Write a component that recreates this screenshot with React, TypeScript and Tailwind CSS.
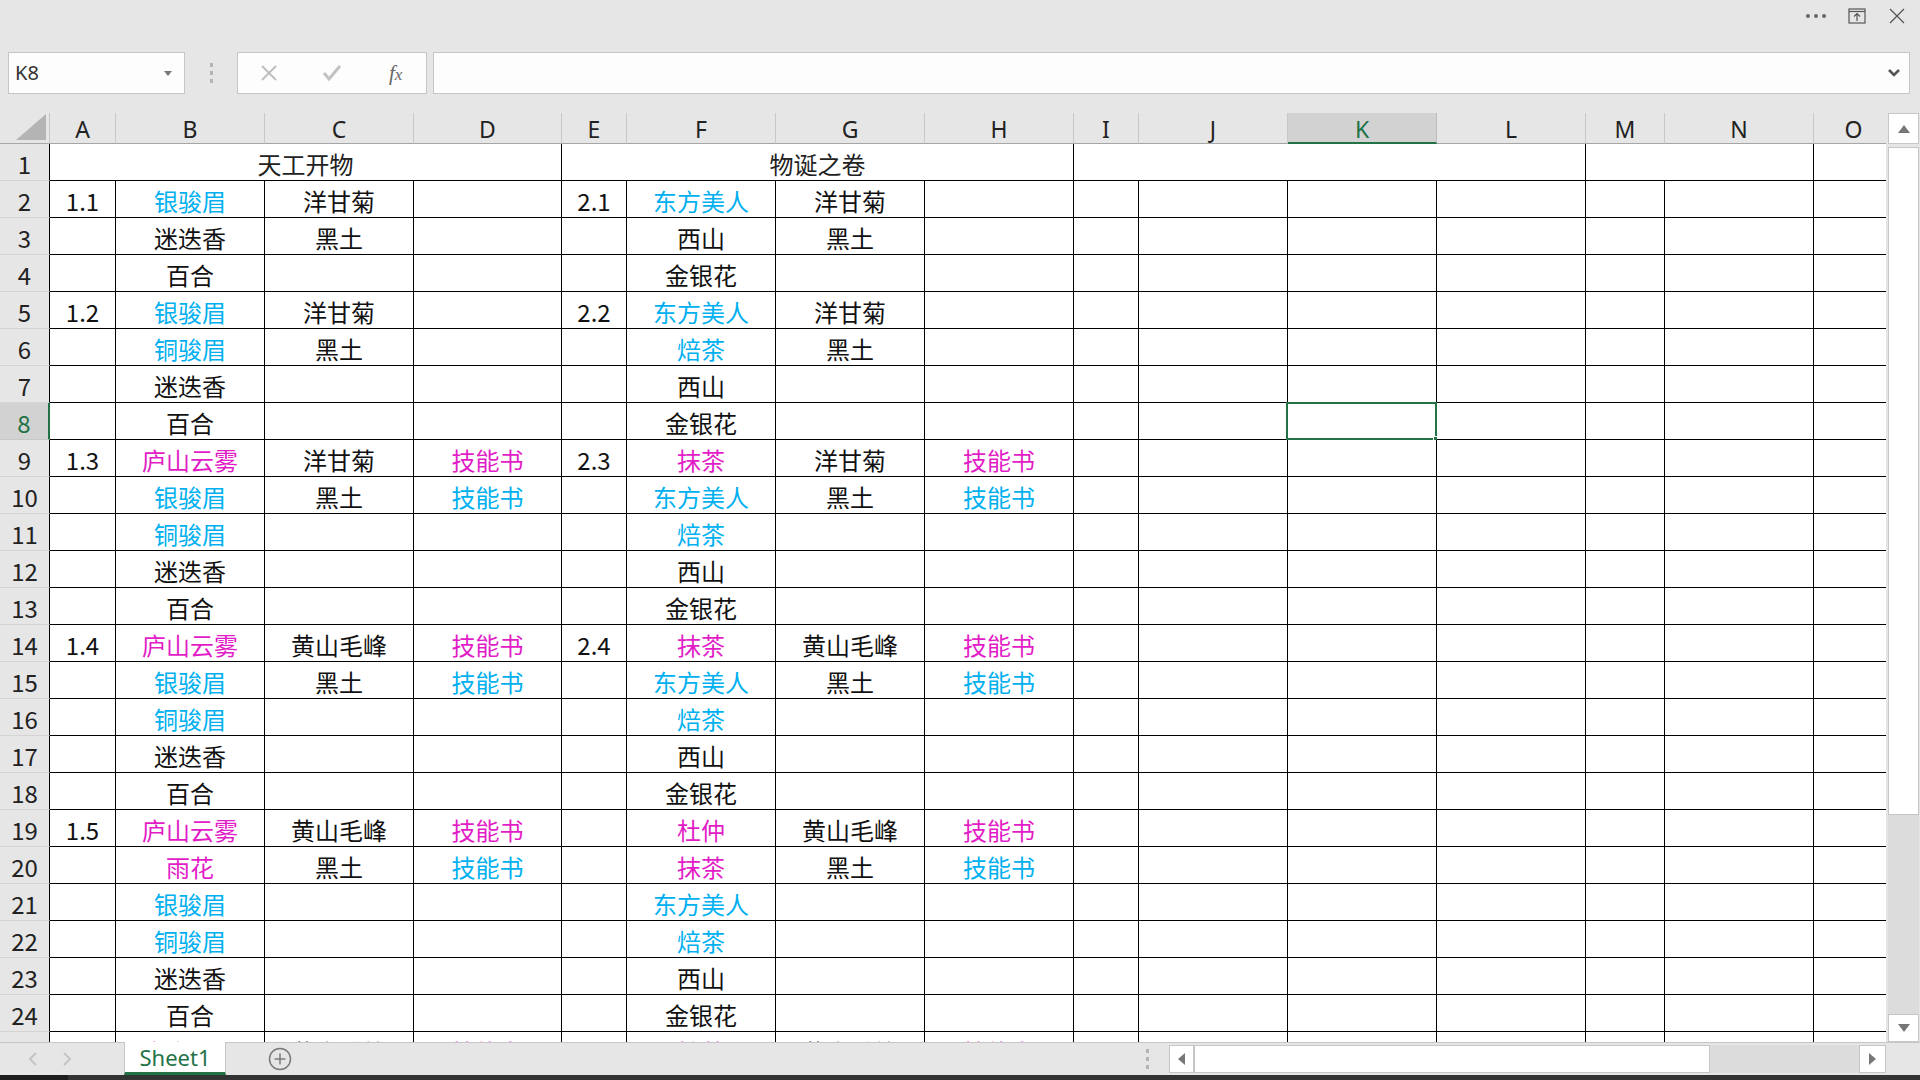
import { Fragment } from 'react'

type Tone = 'k' | 'b' | 'm'

const COLS = ['A', 'B', 'C', 'D', 'E', 'F', 'G', 'H', 'I', 'J', 'K', 'L', 'M', 'N', 'O']

// "文字|b" -> blue, "文字|m" -> magenta, plain -> black
const R: Record<number, string[]> = {
  2: ['1.1', '银骏眉|b', '洋甘菊', '', '2.1', '东方美人|b', '洋甘菊', ''],
  3: ['', '迷迭香', '黑土', '', '', '西山', '黑土', ''],
  4: ['', '百合', '', '', '', '金银花', '', ''],
  5: ['1.2', '银骏眉|b', '洋甘菊', '', '2.2', '东方美人|b', '洋甘菊', ''],
  6: ['', '铜骏眉|b', '黑土', '', '', '焙茶|b', '黑土', ''],
  7: ['', '迷迭香', '', '', '', '西山', '', ''],
  8: ['', '百合', '', '', '', '金银花', '', ''],
  9: ['1.3', '庐山云雾|m', '洋甘菊', '技能书|m', '2.3', '抹茶|m', '洋甘菊', '技能书|m'],
  10: ['', '银骏眉|b', '黑土', '技能书|b', '', '东方美人|b', '黑土', '技能书|b'],
  11: ['', '铜骏眉|b', '', '', '', '焙茶|b', '', ''],
  12: ['', '迷迭香', '', '', '', '西山', '', ''],
  13: ['', '百合', '', '', '', '金银花', '', ''],
  14: ['1.4', '庐山云雾|m', '黄山毛峰', '技能书|m', '2.4', '抹茶|m', '黄山毛峰', '技能书|m'],
  15: ['', '银骏眉|b', '黑土', '技能书|b', '', '东方美人|b', '黑土', '技能书|b'],
  16: ['', '铜骏眉|b', '', '', '', '焙茶|b', '', ''],
  17: ['', '迷迭香', '', '', '', '西山', '', ''],
  18: ['', '百合', '', '', '', '金银花', '', ''],
  19: ['1.5', '庐山云雾|m', '黄山毛峰', '技能书|m', '', '杜仲|m', '黄山毛峰', '技能书|m'],
  20: ['', '雨花|m', '黑土', '技能书|b', '', '抹茶|m', '黑土', '技能书|b'],
  21: ['', '银骏眉|b', '', '', '', '东方美人|b', '', ''],
  22: ['', '铜骏眉|b', '', '', '', '焙茶|b', '', ''],
  23: ['', '迷迭香', '', '', '', '西山', '', ''],
  24: ['', '百合', '', '', '', '金银花', '', ''],
  25: ['', '庐山云雾|m', '黄山毛峰', '技能书|m', '', '抹茶|m', '黄山毛峰', '技能书|m'],
}

const toneClass: Record<Tone, string> = {
  k: 'text-[#111]',
  b: 'text-[#00b0f0]',
  m: 'text-[#e21cc6]',
}

function parse(s: string): [string, Tone] {
  const [t, c] = s.split('|')
  return [t, (c as Tone) || 'k']
}

function Cell({ text, selected }: { text: string; selected?: boolean }) {
  const [t, tone] = parse(text)
  return (
    <div className="relative h-[37px] border-r border-b border-black bg-white text-center leading-[33px] pt-[3px] whitespace-nowrap">
      <span className={toneClass[tone]}>{t}</span>
      {selected && (
        <>
          <div className="absolute -left-[2px] -top-[1px] -right-[1px] -bottom-[1px] border-2 border-[#217346]" />
          <div className="absolute -right-[5px] -bottom-[5px] w-[8px] h-[8px] bg-[#217346] border border-white" />
        </>
      )}
    </div>
  )
}

function RowHead({ n }: { n: number }) {
  const sel = n === 8
  return (
    <div
      className={
        'h-[37px] text-center leading-[33px] pt-[3px] border-b ' +
        (sel
          ? 'bg-[#d2d2d2] text-[#217346] border-b-[#c8c8c8] border-r-2 border-r-[#217346]'
          : 'bg-[#e6e6e6] text-[#222] border-b-[#d4d4d4] border-r border-r-black')
      }
    >
      {n}
    </div>
  )
}

export default function App() {
  const rows = Array.from({ length: 24 }, (_, i) => i + 2)

  return (
    <div className="w-[1920px] h-[1080px] bg-[#e6e6e6] flex flex-col overflow-hidden font-['Noto_Sans_CJK_SC',sans-serif] text-[#222]">
      {/* window buttons */}
      <div className="h-[52px] flex justify-end items-start pt-[5px] pr-[12px] gap-[18px] text-[#555]">
        <div className="w-[24px] h-[22px] flex items-center justify-center gap-[4px]">
          <span className="w-[4px] h-[4px] rounded-full bg-[#666]" />
          <span className="w-[4px] h-[4px] rounded-full bg-[#666]" />
          <span className="w-[4px] h-[4px] rounded-full bg-[#666]" />
        </div>
        <svg width="22" height="22" viewBox="0 0 22 22" fill="none" stroke="#555" strokeWidth="1.2">
          <rect x="3" y="4" width="16" height="14" />
          <path d="M3 6.5h16" />
          <path d="M11 16V9M8 11.5l3-3 3 3" />
        </svg>
        <svg width="22" height="22" viewBox="0 0 22 22" fill="none" stroke="#555" strokeWidth="1.3">
          <path d="M4 4l14 14M18 4L4 18" />
        </svg>
      </div>

      {/* formula bar */}
      <div className="h-[42px] flex items-stretch">
        <div className="ml-[8px] w-[177px] bg-[#fdfdfd] border border-[#c6c6c6] flex items-center pl-[6px] pr-[12px] font-['Noto_Sans',sans-serif] text-[20px] text-[#333]">
          <span className="flex-1">K8</span>
          <svg width="8" height="5" viewBox="0 0 8 5">
            <path d="M0 0h8L4 5z" fill="#777" />
          </svg>
        </div>
        <div className="w-[52px] flex flex-col items-center justify-center gap-[4px]">
          <span className="w-[3px] h-[4px] bg-[#b5b5b5]" />
          <span className="w-[3px] h-[4px] bg-[#b5b5b5]" />
          <span className="w-[3px] h-[4px] bg-[#b5b5b5]" />
        </div>
        <div className="w-[190px] bg-[#fdfdfd] border border-[#c6c6c6] relative">
          <svg className="absolute left-[22px] top-[11px]" width="18" height="18" viewBox="0 0 18 18" fill="none" stroke="#bdbdbd" strokeWidth="1.8">
            <path d="M2 2l14 14M16 2L2 16" />
          </svg>
          <svg className="absolute left-[84px] top-[11px]" width="20" height="18" viewBox="0 0 20 18" fill="none" stroke="#c2c2c2" strokeWidth="3">
            <path d="M2 9l5 6L18 2" />
          </svg>
          <span className="absolute left-[151px] top-[5px] font-['Liberation_Serif',serif] italic text-[21px] text-[#666]">
            f<span className="text-[17px]">x</span>
          </span>
        </div>
        <div className="ml-[6px] mr-[10px] flex-1 bg-[#fdfdfd] border border-[#c6c6c6] flex items-center justify-end pr-[8px]">
          <svg width="14" height="10" viewBox="0 0 14 10" fill="none" stroke="#555" strokeWidth="2.6">
            <path d="M2 2l5 5 5-5" />
          </svg>
        </div>
      </div>

      <div className="h-[19px]" />

      {/* sheet + vertical scrollbar */}
      <div className="h-[929px] flex">
        <div className="w-[1886px] overflow-hidden text-[24px]">
          <div className="w-[1894px] grid grid-cols-[50px_66px_149px_149px_148px_65px_149px_149px_149px_65px_149px_149px_149px_79px_149px_80px]">
            {/* column header */}
            <div className="h-[31px] border-b border-[#a6a6a6] border-r border-r-[#c6c6c6] relative">
              <svg className="absolute right-[3px] bottom-[3px]" width="30" height="26" viewBox="0 0 30 26">
                <path d="M30 0V26H0z" fill="#b4b4b4" />
              </svg>
            </div>
            {COLS.map((c) => (
              <div
                key={c}
                className={
                  'h-[31px] flex items-center justify-center pt-[3px] font-[\'Noto_Sans\',sans-serif] text-[23px] ' +
                  (c === 'K'
                    ? 'bg-[#d2d2d2] text-[#217346] border-b-2 border-[#217346] border-r border-r-[#bdbdbd]'
                    : 'border-b border-[#a6a6a6] border-r border-r-[#c8c8c8]')
                }
              >
                {c}
              </div>
            ))}

            {/* row 1 with merges */}
            <RowHead n={1} />
            <div className="col-span-4 h-[37px] border-r border-b border-black bg-white text-center leading-[33px] pt-[3px]">天工开物</div>
            <div className="col-span-4 h-[37px] border-r border-b border-black bg-white text-center leading-[33px] pt-[3px]">物诞之卷</div>
            <div className="col-span-4 h-[37px] border-r border-b border-black bg-white" />
            <div className="col-span-2 h-[37px] border-r border-b border-black bg-white" />
            <div className="h-[37px] border-r border-b border-black bg-white" />

            {rows.map((r) => (
              <Fragment key={r}>
                <RowHead n={r} />
                {COLS.map((c, ci) => (
                  <Cell key={c} text={ci < 8 ? R[r][ci] : ''} selected={r === 8 && c === 'K'} />
                ))}
              </Fragment>
            ))}
          </div>
        </div>

        {/* vertical scrollbar */}
        <div className="w-[34px] flex flex-col items-center pl-[1px]">
          <div className="w-[31px] h-[31px] bg-white border border-[#c6c6c6] flex items-center justify-center">
            <svg width="12" height="8" viewBox="0 0 12 8">
              <path d="M0 8h12L6 0z" fill="#777" />
            </svg>
          </div>
          <div className="w-[31px] h-[668px] mt-[3px] bg-white border border-[#c6c6c6]" />
          <div className="w-[31px] flex-1 bg-[#dcdcdc]" />
          <div className="w-[31px] h-[28px] bg-white border border-[#c6c6c6] flex items-center justify-center">
            <svg width="12" height="8" viewBox="0 0 12 8">
              <path d="M0 0h12L6 8z" fill="#777" />
            </svg>
          </div>
        </div>
      </div>

      {/* sheet tabs + horizontal scrollbar */}
      <div className="h-[33px] flex items-stretch border-t border-[#c6c6c6]">
        <div className="w-[124px] flex items-center pl-[28px] gap-[24px]">
          <svg width="10" height="14" viewBox="0 0 10 14">
            <path d="M8 1L2 7l6 6" fill="none" stroke="#c4c4c4" strokeWidth="2" />
          </svg>
          <svg width="10" height="14" viewBox="0 0 10 14">
            <path d="M2 1l6 6-6 6" fill="none" stroke="#c4c4c4" strokeWidth="2" />
          </svg>
        </div>
        <div className="w-[102px] -mt-[1px] bg-white border-x border-[#c6c6c6] border-b-[3px] border-b-[#217346] flex items-center justify-center font-['Noto_Sans',sans-serif] text-[22px] text-[#217346]">
          Sheet1
        </div>
        <div className="w-[108px] flex items-center justify-center">
          <svg width="24" height="24" viewBox="0 0 24 24" fill="none" stroke="#7a7a7a" strokeWidth="1.5">
            <circle cx="12" cy="12" r="10.5" />
            <path d="M12 6.5v11M6.5 12h11" />
          </svg>
        </div>
        <div className="flex-1" />
        <div className="w-[44px] flex flex-col items-center justify-center gap-[4px]">
          <span className="w-[3px] h-[4px] bg-[#b5b5b5]" />
          <span className="w-[3px] h-[4px] bg-[#b5b5b5]" />
          <span className="w-[3px] h-[4px] bg-[#b5b5b5]" />
        </div>
        <div className="w-[717px] flex items-center py-[2px]">
          <div className="w-[25px] h-full bg-white border border-[#c6c6c6] flex items-center justify-center">
            <svg width="7" height="12" viewBox="0 0 7 12">
              <path d="M7 0v12L0 6z" fill="#777" />
            </svg>
          </div>
          <div className="w-[516px] h-full bg-white border border-[#c6c6c6]" />
          <div className="flex-1 h-full bg-[#dcdcdc]" />
          <div className="w-[27px] h-full bg-white border border-[#c6c6c6] flex items-center justify-center">
            <svg width="7" height="12" viewBox="0 0 7 12">
              <path d="M0 0v12L7 6z" fill="#777" />
            </svg>
          </div>
        </div>
        <div className="w-[34px]" />
      </div>
      <div className="h-[5px] flex">
        <div className="w-[68px] bg-[#1e1e1e]" />
        <div className="flex-1 bg-[#333]" />
      </div>
    </div>
  )
}
